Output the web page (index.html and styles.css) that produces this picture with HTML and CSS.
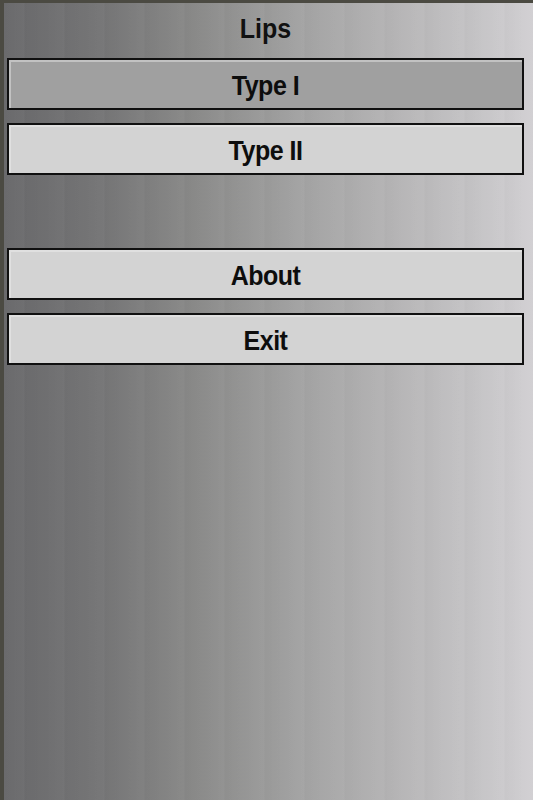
FILE: index.html
```html
<!DOCTYPE html>
<html>
<head>
<meta charset="utf-8">
<link rel="stylesheet" href="styles.css">
</head>
<body>
<div class="screen">
  <div class="title"><span class="label">Lips</span></div>
  <div class="menu">
    <div class="btn selected"><span class="label">Type I</span></div>
    <div class="btn"><span class="label">Type II</span></div>
    <div class="btn spaced"><span class="label">About</span></div>
    <div class="btn"><span class="label">Exit</span></div>
  </div>
</div>
</body>
</html>
```
FILE: styles.css
```css
html, body {
  margin: 0;
  padding: 0;
}
body {
  width: 533px;
  height: 800px;
  overflow: hidden;
  font-family: "Liberation Sans", Arial, sans-serif;
}
.screen {
  box-sizing: border-box;
  width: 533px;
  height: 800px;
  border-top: 3px solid #4b4a42;
  border-left: 4px solid #4b4a42;
  padding: 0 9px 0 3px;
  background-color: #9a9a9a;
  background-image:
    repeating-linear-gradient(to right, rgba(255,255,255,0) 0px, rgba(255,255,255,0.02) 20px, rgba(0,0,0,0.015) 21px, rgba(0,0,0,0) 40px),
    linear-gradient(to right, #6a6a6c 0%, #757576 18%, #8a8a89 36%, #a3a3a3 56%, #b6b5b6 74%, #c6c5c7 90%, #d2d0d3 100%);
}
.label {
  display: inline-block;
  transform: scaleY(1.12);
}
.title {
  height: 50px;
  line-height: 50px;
  text-align: center;
  font-weight: bold;
  font-size: 25px;
  color: #111;
}
.menu {
  margin-top: 5px;
  display: flex;
  flex-direction: column;
  gap: 13px;
}
.btn {
  box-sizing: border-box;
  height: 52px;
  border: 2px solid #101010;
  background: #d3d3d3;
  box-shadow: inset 2px 2px 0 #e0e0e0;
  display: flex;
  align-items: center;
  justify-content: center;
  padding-top: 2px;
  font-weight: bold;
  font-size: 25px;
  letter-spacing: -0.5px;
  color: #0d0d0d;
}
.btn.selected {
  background: #a0a0a0;
  box-shadow: inset 2px 2px 0 #c2c2c2;
}
.btn.spaced {
  margin-top: 60px;
}
```
